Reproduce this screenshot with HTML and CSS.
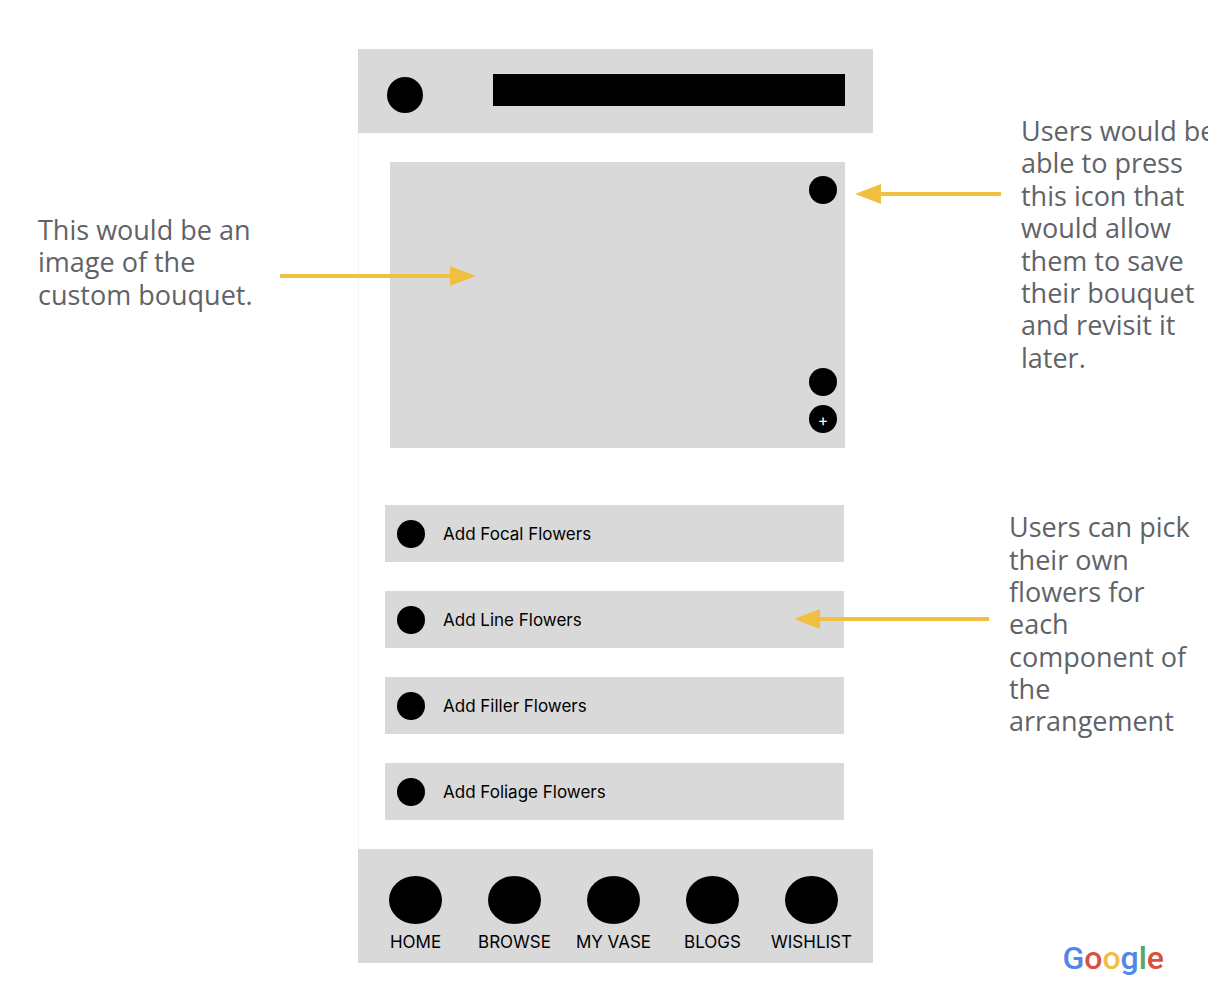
FILE: index.html
```html
<!DOCTYPE html>
<html lang="en">
<head>
<meta charset="utf-8">
<meta name="viewport" content="width=device-width, initial-scale=1">
<title>Custom bouquet wireframe</title>
<link rel="stylesheet" href="styles.css">
</head>
<body>
<main class="slide">
  <section class="side side-left">
    <p class="note note-image">This would be an image of the custom bouquet.</p>
  </section>

  <section class="phone">
    <header class="topbar">
      <button class="dot dot-menu" type="button" aria-label="Menu"></button>
      <div class="title-bar"></div>
    </header>

    <div class="content">
      <div class="preview">
        <button class="dot" type="button" aria-label="Save bouquet"></button>
        <div class="preview-actions">
          <button class="dot" type="button" aria-label="Share"></button>
          <button class="dot dot-add" type="button">+</button>
        </div>
        <svg class="arrow arrow-image" width="196" height="20" viewBox="0 0 196 20" aria-hidden="true"><path d="M0 8h170V0l26 10-26 10v-8H0z"/></svg>
        <svg class="arrow arrow-save" width="146" height="20" viewBox="0 0 146 20" aria-hidden="true"><path d="M146 8H26V0L0 10l26 10v-8h120z"/></svg>
      </div>

      <ul class="options">
        <li class="option"><button class="option-button" type="button"><span class="dot"></span>Add Focal Flowers</button></li>
        <li class="option">
          <button class="option-button" type="button"><span class="dot"></span>Add Line Flowers</button>
          <svg class="arrow arrow-option" width="195" height="20" viewBox="0 0 195 20" aria-hidden="true"><path d="M195 8H26V0L0 10l26 10v-8h169z"/></svg>
        </li>
        <li class="option"><button class="option-button" type="button"><span class="dot"></span>Add Filler Flowers</button></li>
        <li class="option"><button class="option-button" type="button"><span class="dot"></span>Add Foliage Flowers</button></li>
      </ul>
    </div>

    <nav class="tabs">
      <a class="tab" href="#home"><span class="tab-icon"></span>HOME</a>
      <a class="tab" href="#browse"><span class="tab-icon"></span>BROWSE</a>
      <a class="tab" href="#vase"><span class="tab-icon"></span>MY VASE</a>
      <a class="tab" href="#blogs"><span class="tab-icon"></span>BLOGS</a>
      <a class="tab" href="#wishlist"><span class="tab-icon"></span>WISHLIST</a>
    </nav>
  </section>

  <section class="side side-right">
    <p class="note note-save">Users would be able to press this icon that would allow them to save their bouquet and revisit it later.</p>
    <p class="note note-pick">Users can pick their own flowers for each component of the arrangement</p>
    <div class="logo"><span class="blue">G</span><span class="red">o</span><span class="yellow">o</span><span class="blue">g</span><span class="green">l</span><span class="red">e</span></div>
  </section>
</main>
</body>
</html>
```
FILE: styles.css
```css
* {
  box-sizing: border-box;
}

body {
  margin: 0;
  background: #fff;
  color: #000;
  font-family: Inter, "Liberation Sans", sans-serif;
  font-size: 17px;
}

button {
  border: 0;
  padding: 0;
  font: inherit;
  color: inherit;
  cursor: pointer;
}

.slide {
  display: grid;
  grid-template-columns: 358fr 515fr 335fr;
  min-height: 100vh;
  overflow: hidden;
}

.side {
  display: flex;
  flex-direction: column;
  min-width: 0;
}

.side-left {
  padding: 214px 80px 0 38px;
}

.side-right {
  padding: 115px 0 15px 136px;
}

.note {
  margin: 0;
  color: #5f6368;
  font-family: "Open Sans", "Noto Sans", sans-serif;
  font-size: 27px;
  line-height: 1.2;
}

.note-save {
  width: 200px;
  margin-left: 12px;
}

.note-pick {
  width: 190px;
  margin-top: 137px;
}

.phone {
  display: flex;
  flex-direction: column;
  min-width: 0;
  margin: 49px 0 30px;
}

.topbar {
  display: flex;
  align-items: flex-start;
  gap: 70px;
  padding: 25px 28px 27px 29px;
  background: #d9d9d9;
}

.dot {
  flex: none;
  width: 28px;
  height: 28px;
  border-radius: 50%;
  background: #000;
}

.dot-menu {
  width: 36px;
  height: 36px;
  margin: 3px 0 -7px;
}

.title-bar {
  flex: 1;
  height: 32px;
  background: #000;
}

.content {
  flex: 1;
  padding: 29px 28px 29px 26px;
  border-left: 1px solid #f3f3f3;
}

.preview {
  position: relative;
  display: flex;
  flex-direction: column;
  justify-content: space-between;
  align-items: flex-end;
  height: 286px;
  margin-left: 5px;
  padding: 14px 8px 15px;
  background: #d9d9d9;
}

.preview-actions {
  display: flex;
  flex-direction: column;
  gap: 9px;
}

.dot-add {
  padding-top: 2px;
  color: #fff;
  font-size: 16px;
  line-height: 24px;
}

.options {
  display: flex;
  flex-direction: column;
  gap: 29px;
  margin: 57px 1px 0 0;
  padding: 0;
  list-style: none;
}

.option {
  position: relative;
}

.option-button {
  display: flex;
  align-items: center;
  gap: 18px;
  width: 100%;
  height: 57px;
  padding: 0 12px;
  background: #d9d9d9;
}

.arrow {
  position: absolute;
  fill: #f1bf42;
}

.arrow-image {
  top: 104px;
  left: -110px;
}

.arrow-save {
  top: 22px;
  left: calc(100% + 10px);
}

.arrow-option {
  top: 18px;
  left: calc(100% - 50px);
}

.tabs {
  display: grid;
  grid-template-columns: repeat(5, 1fr);
  padding: 27px 12px 10px 8px;
  background: #d9d9d9;
}

.tab {
  display: flex;
  flex-direction: column;
  align-items: center;
  gap: 7px;
  color: inherit;
  line-height: 22px;
  text-decoration: none;
  white-space: nowrap;
}

.tab-icon {
  width: 53px;
  height: 48px;
  border-radius: 50%;
  background: #000;
}

.logo {
  align-self: flex-end;
  margin-top: auto;
  padding-right: 44px;
  font-family: Roboto, Inter, sans-serif;
  font-size: 32px;
  font-weight: 500;
  line-height: 40px;
}

.blue { color: #5186ec; }
.red { color: #d85140; }
.yellow { color: #f1bf42; }
.green { color: #58a55c; }
```
